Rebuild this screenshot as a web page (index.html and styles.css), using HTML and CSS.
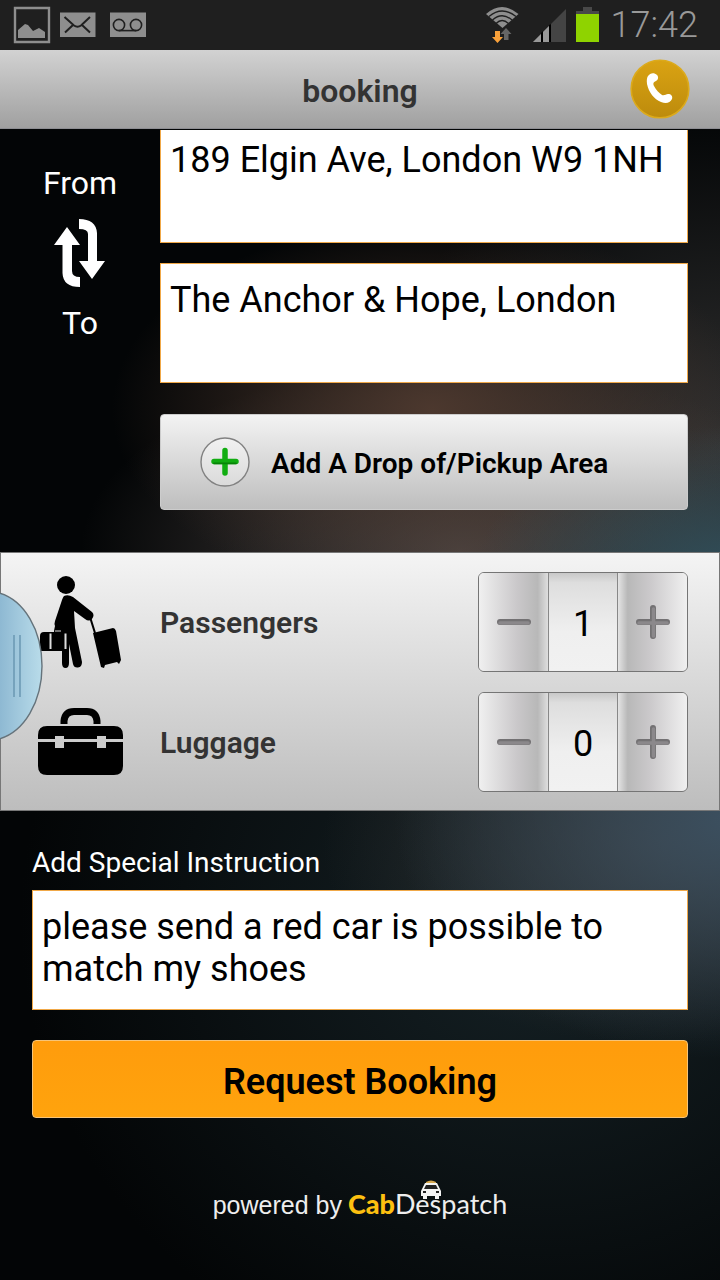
FILE: index.html
```html
<!DOCTYPE html>
<html lang="en">
<head>
<meta charset="utf-8">
<meta name="viewport" content="width=device-width, initial-scale=1">
<title>booking</title>
<link rel="stylesheet" href="styles.css">
</head>
<body>
<div class="status">
  <svg class="status-left" width="138" height="50" viewBox="0 0 138 50" aria-hidden="true">
    <path d="M15 8H49V42H15Z" fill="none" stroke="#8e8e8e" stroke-width="2.4"/>
    <path d="M18 38V30L25 24L28 25L33 31L39 28L45 32V38Z" fill="#8e8e8e"/>
    <path d="M60 12.500H95.500V37H60Z" fill="#8e8e8e"/>
    <path d="M64.500 17L74 25.500Q77.500 28 81 25.500L90 17M65 32.500L73 25M82 25L90 32.500" fill="none" stroke="#1f1f1f" stroke-width="2"/>
    <path d="M110 12.500H146V37H110Z" fill="#8e8e8e"/>
    <g fill="none" stroke="#1f1f1f" stroke-width="1.600"><circle cx="119" cy="25" r="5.600"/><circle cx="136" cy="25" r="5.600"/><path d="M119 30.600H136"/></g>
  </svg>
  <div class="status-right">
    <svg width="116" height="50" viewBox="484 0 116 50" aria-hidden="true">
      <path d="M486 14Q502 0 518.500 14L502.500 28Z" fill="#8e8e8e"/>
      <g fill="none" stroke="#1f1f1f" stroke-width="1.300"><path d="M489 16.500Q502 5.500 516 16.500"/><path d="M492.500 20Q502 11.500 512 20"/><path d="M496 23.500Q502 17.500 508.500 23.500"/></g>
      <path d="M495 31H500V37H503L497.500 43L492 37H495Z" fill="#f9a13a"/>
      <path d="M504 40V34H500.500L506 28L511.500 34H508.500V40Z" fill="#666"/>
      <path d="M533 42L566 9V42Z" fill="#444"/>
      <path d="M533 42L550 25V42Z" fill="#999"/>
      <path d="M541 33V42H543V31ZM549 25V42H551V24Z" fill="#000"/>
      <path d="M583 7H592V11H599V14H576V11H583Z" fill="#484848"/>
      <path d="M576 14H599V42H576Z" fill="#8fd300"/>
    </svg>
    <time class="clock">17:42</time>
  </div>
</div>

<header class="titlebar">
  <h1>booking</h1>
  <button class="call" type="button" aria-label="Call">
    <svg width="60" height="60" viewBox="0 0 60 60" aria-hidden="true">
      <defs><linearGradient id="gold" x2="0" y2="1"><stop stop-color="#daa313"/><stop offset="1" stop-color="#bd8b0c"/></linearGradient></defs>
      <circle cx="30" cy="30" r="28.800" fill="url(#gold)" stroke="#dcaa1b" stroke-width="1.600"/>
      <path d="M18 17C20 14 24 13 27 16C29 18 28 21 26 22C23 23 23 25 24 27C26 31 29 34 32 36C34 37 36 35 38 35C41 35 43 37 42 40C40 44 36 45 31 43C24 40 19 34 17 25C16.500 21 17 18.500 18 17Z" fill="#fff"/>
    </svg>
  </button>
</header>

<main>
  <section class="route">
    <div class="ends">
      <label for="from">From</label>
      <button class="swap" type="button" aria-label="Swap from and to">
        <svg width="52" height="68" viewBox="0 0 52 68" aria-hidden="true">
          <path d="M0 26L13 8L26 26H18V52Q18 58 26 58V68Q9 68 8.500 54V26Z" fill="#fff"/>
          <path d="M51 42L38 60L25 42H34V15Q34 10 25 10V0Q42 0 43 14V42Z" fill="#fff"/>
        </svg>
      </button>
      <label for="to">To</label>
    </div>
    <div class="stops">
      <textarea id="from" class="field field-under">189 Elgin Ave, London W9 1NH</textarea>
      <textarea id="to" class="field">The Anchor &amp; Hope, London</textarea>
      <button class="add" type="button">
        <svg width="50" height="50" viewBox="0 0 50 50" aria-hidden="true">
          <defs><linearGradient id="disc" x2="0" y2="1"><stop stop-color="#f2f2f2"/><stop offset="1" stop-color="#dadada"/></linearGradient></defs>
          <circle cx="25" cy="25" r="24" fill="url(#disc)" stroke="#818181" stroke-width="1.400"/>
          <path d="M25 13.500V36M14 24.500H36" stroke="#11ad11" stroke-width="5.500" stroke-linecap="round"/>
          <path d="M14 26.300H36" stroke="#078307" stroke-width="1.800" stroke-linecap="round"/>
        </svg>
        <span>Add A Drop of/Pickup Area</span>
      </button>
    </div>
  </section>

  <section class="counts">
    <div class="row">
      <svg class="pic" width="82" height="92" viewBox="0 0 82 92" aria-hidden="true">
        <circle cx="26" cy="9" r="9"/>
        <path d="M24 20Q28 18 33 21L52 36Q55 39 52 43Q49 46 45 43L34 35L35 52L42 86Q42 91 38 91.500Q34 92 33 88L29 68V87Q29 92 25.500 92Q22 92 22 87V75H0V60Q0 56 4 56H14Q14 54 15 50Q14 48 15 45L22 24Q23 21 24 20Z"/>
        <path d="M10.500 57.500V73M25.500 57.500V73" stroke="#ddd" stroke-width="2"/>
        <path d="M15 55H21" stroke="#ddd" stroke-width="1"/>
        <path d="M50 41L55 57" stroke="#000" stroke-width="2"/>
        <path d="M53 57L73 52Q75 52 76 55L81 84L79 88L77 86L65 89L64 92L61 91Z"/>
      </svg>
      <span class="name" id="passengers">Passengers</span>
      <div class="stepper" role="group" aria-labelledby="passengers">
        <button class="minus" type="button" aria-label="Fewer passengers"><svg width="34" height="34" viewBox="0 0 34 34"><path d="M3 17H31" stroke="#737173" stroke-width="6" stroke-linecap="round"/><path d="M3 18H31" stroke="#8b888b" stroke-width="3.500" stroke-linecap="round"/></svg></button>
        <input type="text" inputmode="numeric" value="1" aria-labelledby="passengers">
        <button class="plus" type="button" aria-label="More passengers"><svg width="34" height="34" viewBox="0 0 34 34"><path d="M3 17H31M17 3V31" stroke="#737173" stroke-width="6" stroke-linecap="round"/><path d="M3 18H31M17.500 4V31" stroke="#8b888b" stroke-width="3.500" stroke-linecap="round"/></svg></button>
      </div>
    </div>
    <div class="row">
      <svg class="pic" width="86" height="68" viewBox="0 0 86 68" aria-hidden="true">
        <path d="M26 16V13Q27 3.500 36 3.500H49Q58 3.500 59 13V16" fill="none" stroke="#000" stroke-width="7"/>
        <path d="M0 31V27Q0 18 9 18H76Q85 18 85 27V31H68V28H59V31H26V28H17V31ZM0 34H17V40H26V34H59V40H68V34H85V58Q85 67 76 67H9Q0 67 0 58Z"/>
      </svg>
      <span class="name" id="luggage">Luggage</span>
      <div class="stepper" role="group" aria-labelledby="luggage">
        <button class="minus" type="button" aria-label="Less luggage"><svg width="34" height="34" viewBox="0 0 34 34"><path d="M3 17H31" stroke="#737173" stroke-width="6" stroke-linecap="round"/><path d="M3 18H31" stroke="#8b888b" stroke-width="3.500" stroke-linecap="round"/></svg></button>
        <input type="text" inputmode="numeric" value="0" aria-labelledby="luggage">
        <button class="plus" type="button" aria-label="More luggage"><svg width="34" height="34" viewBox="0 0 34 34"><path d="M3 17H31M17 3V31" stroke="#737173" stroke-width="6" stroke-linecap="round"/><path d="M3 18H31M17.500 4V31" stroke="#8b888b" stroke-width="3.500" stroke-linecap="round"/></svg></button>
      </div>
    </div>
    <button class="drawer" type="button" aria-label="Open side panel">
      <svg width="44" height="148" viewBox="0 0 44 148" aria-hidden="true">
        <defs><linearGradient id="blue"><stop stop-color="#8db8d2"/><stop offset="1" stop-color="#b9dcea"/></linearGradient></defs>
        <path d="M-1 1C24 8 42 38 42 74C42 110 24 140 -1 147Z" fill="url(#blue)" stroke="#65737b" stroke-width="1.400"/>
        <path d="M14 43V105M20 43V105" stroke="#6d9ab5" stroke-width="1.600"/>
      </svg>
    </button>
  </section>

  <section class="notes">
    <label for="notes">Add Special Instruction</label>
    <textarea id="notes" class="field">please send a red car is possible to match my shoes</textarea>
    <button class="request" type="submit">Request Booking</button>
  </section>
</main>

<footer class="powered">
  <span>powered by</span>
  <span class="brand"><b>Cab</b>Despatch
    <svg class="cab" width="22" height="20" viewBox="0 0 22 20" aria-hidden="true">
      <path d="M6 2Q11 -1 16 2V4H6Z" fill="#d6a950"/>
      <path d="M5 3H17L20 9L21 11V16H19V19H15V16H7V19H3V16H1V11L2 9Z" fill="#f4f4f4"/>
      <path d="M6 5H16L18 9H4ZM3 11H6V13H3ZM16 11H19V13H16Z" fill="#222"/>
    </svg>
  </span>
</footer>
</body>
</html>
```
FILE: styles.css
```css
* {
  box-sizing: border-box;
}

body {
  margin: 0;
  min-height: 100vh;
  color: #fff;
  font-family: Roboto, sans-serif;
  background:
    radial-gradient(ellipse 260px 150px at 102% 45%, #30505c 0%, rgba(48, 80, 92, 0) 100%),
    radial-gradient(ellipse 340px 240px at 102% 64%, #3c5060 0%, rgba(60, 80, 96, 0) 100%),
    radial-gradient(ellipse 320px 190px at 60% 32%, #4c382e 0%, rgba(76, 56, 46, 0) 100%),
    radial-gradient(ellipse 380px 190px at 64% 43%, #4a4341 0%, rgba(74, 67, 65, 0) 100%),
    radial-gradient(ellipse 340px 340px at 100% 35%, #303030 0%, rgba(48, 48, 48, 0) 100%),
    radial-gradient(ellipse 340px 200px at 92% 66%, #343434 0%, rgba(52, 52, 52, 0) 100%),
    radial-gradient(ellipse 520px 480px at 75% 72%, #162226 0%, rgba(22, 34, 38, 0) 100%),
    #030506;
}

button {
  padding: 0;
  border: 0;
  background: none;
  color: inherit;
  font-family: inherit;
}

svg {
  display: block;
}

.status {
  display: flex;
  justify-content: space-between;
  height: 50px;
  padding-right: 22px;
  background: #1f1f1f;
}

.status-left {
  overflow: visible;
}

.status-right {
  display: flex;
  gap: 11px;
}

.clock {
  color: #999;
  font-size: 36px;
  font-weight: 300;
  line-height: 50px;
}

.titlebar {
  display: grid;
  grid-template-columns: 60px 1fr 60px;
  align-items: center;
  height: 79px;
  padding: 0 30px;
  background: linear-gradient(#d2d2d2, #a0a0a0);
  border-bottom: 1px solid #8d8d92;
}

.titlebar h1 {
  grid-column: 2;
  margin: 0;
  padding-top: 4px;
  color: #333;
  font-size: 32px;
  font-weight: 600;
  line-height: 40px;
  text-align: center;
}

.route {
  display: grid;
  grid-template-columns: 160px 1fr;
  padding: 1px 32px 42px 0;
}

.ends {
  display: flex;
  flex-direction: column;
  align-items: center;
  gap: 16px;
  padding-top: 33px;
  font-size: 32px;
  line-height: 40px;
}

.stops {
  display: grid;
}

.field {
  display: block;
  width: 100%;
  height: 120px;
  padding: 15px 9px;
  border: 1px solid #f0a848;
  border-radius: 0;
  background: #fff;
  color: #000;
  font: 36px/42px Roboto, sans-serif;
  resize: none;
  overflow: hidden;
  outline: 0;
}

.field-under {
  height: 113px;
  margin-bottom: 20px;
  padding-top: 9px;
  border-top: 0;
}

.add {
  display: flex;
  align-items: center;
  gap: 21px;
  height: 96px;
  margin-top: 31px;
  padding-left: 39px;
  border: 1px solid #ccc;
  border-radius: 4px;
  background: linear-gradient(#f3f3f3, #bebebe);
  color: #000;
  font-size: 28px;
  font-weight: 600;
  line-height: 32px;
}

.add span {
  padding-top: 4px;
}

.counts {
  position: relative;
  display: grid;
  gap: 20px;
  padding: 19px 32px 18px 0;
  border: 1px solid #777;
  background: linear-gradient(#f4f4f4, #bdbdbd);
  color: #333;
}

.row {
  display: grid;
  grid-template-columns: 159px 1fr 210px;
  align-items: center;
  margin-right: -1px;
}

.pic {
  justify-self: center;
}

.name {
  padding-top: 2px;
  font-size: 30px;
  font-weight: 600;
  line-height: 36px;
}

.stepper {
  display: grid;
  grid-template-columns: 69px 1fr 69px;
  height: 100px;
  border: 1px solid #757575;
  border-radius: 6px;
  overflow: hidden;
}

.stepper button {
  display: grid;
  place-items: center;
}

.minus {
  background: linear-gradient(90deg, #f0f0f0, #cac8ca 55%, #b8b8b8 85%, #dedede);
}

.plus {
  background: linear-gradient(90deg, #e4e4e4, #b8b8b8 14%, #cac8ca 45%, #f0f0f0);
}

.stepper input {
  width: 100%;
  padding: 4px 0 0;
  border: 0;
  border-left: 1px solid #888;
  border-right: 1px solid #888;
  border-radius: 0;
  background: linear-gradient(#c8c8c8, #dedede 10%, #efefef 60%, #f1f1f1);
  color: #000;
  font: 36px Roboto, sans-serif;
  text-align: center;
}

.drawer {
  position: absolute;
  top: 39px;
  left: -1px;
}

.notes {
  padding: 32px 32px 0;
}

.notes label {
  display: block;
  margin-bottom: 7px;
  font-size: 28px;
  line-height: 40px;
}

.request {
  width: 100%;
  height: 78px;
  margin-top: 30px;
  padding-top: 6px;
  border: 1px solid #f6c478;
  border-radius: 4px;
  background: linear-gradient(#ff9c0c, #ffa30d);
  color: #000;
  font-size: 36px;
  font-weight: 600;
}

.powered {
  display: flex;
  justify-content: center;
  align-items: baseline;
  gap: 6px;
  padding-top: 66px;
  color: #eee;
  font: 25px/40px "Liberation Sans", Arial, sans-serif;
}

.brand {
  position: relative;
  font: 27px/40px Lato, "Open Sans", sans-serif;
}

.brand b {
  color: #fdc010;
  font-weight: 900;
}

.cab {
  position: absolute;
  top: -4px;
  left: 72px;
}
```
